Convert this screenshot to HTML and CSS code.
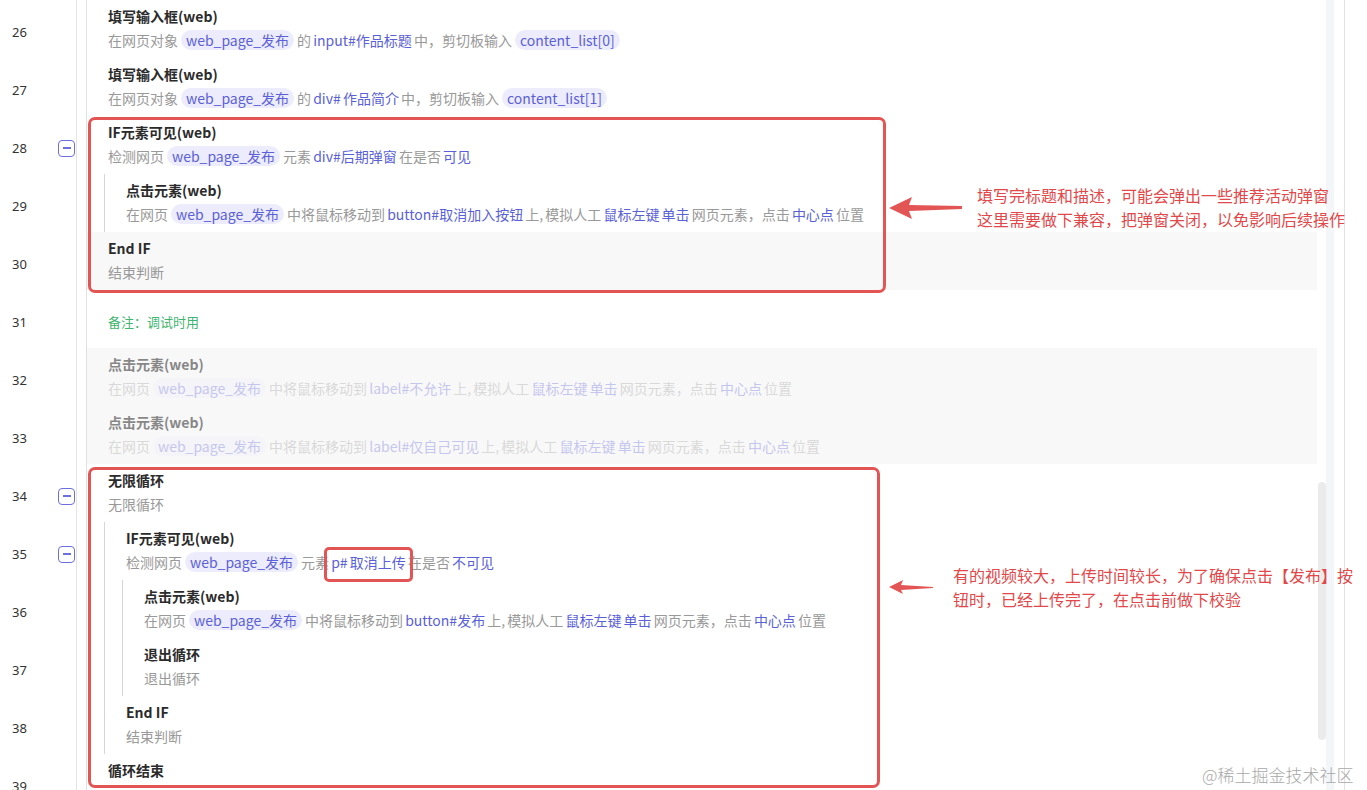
FILE: index.html
```html
<!DOCTYPE html>
<html lang="zh-CN">
<head>
  <meta charset="UTF-8">
  <title>流程编辑</title>
  <link rel="stylesheet" href="styles.css">
</head>
<body>
  <div class="editor">
    <div class="gutter">
      <div class="ln"><span class="num">26</span></div>
      <div class="ln"><span class="num">27</span></div>
      <div class="ln"><span class="num">28</span><span class="fold"></span></div>
      <div class="ln"><span class="num">29</span></div>
      <div class="ln"><span class="num">30</span></div>
      <div class="ln"><span class="num">31</span></div>
      <div class="ln"><span class="num">32</span></div>
      <div class="ln"><span class="num">33</span></div>
      <div class="ln"><span class="num">34</span><span class="fold"></span></div>
      <div class="ln"><span class="num">35</span><span class="fold"></span></div>
      <div class="ln"><span class="num">36</span></div>
      <div class="ln"><span class="num">37</span></div>
      <div class="ln"><span class="num">38</span></div>
      <div class="ln"><span class="num">39</span></div>
    </div>

    <div class="content">
      <div class="row">
        <div class="title">填写输入框(web)</div>
        <div class="desc">在网页对象<span class="chip">web_page_发布</span>的 <span class="link">input#作品标题</span> 中，剪切板输入<span class="chip">content_list[0]</span></div>
      </div>
      <div class="row">
        <div class="title">填写输入框(web)</div>
        <div class="desc">在网页对象<span class="chip">web_page_发布</span>的 <span class="link">div# 作品简介</span> 中，剪切板输入<span class="chip">content_list[1]</span></div>
      </div>
      <div class="row">
        <div class="title">IF元素可见(web)</div>
        <div class="desc">检测网页<span class="chip">web_page_发布</span>元素 <span class="link">div#后期弹窗</span> 在是否 <span class="link">可见</span></div>
      </div>
      <div class="nest">
        <div class="row">
          <div class="title">点击元素(web)</div>
          <div class="desc">在网页<span class="chip">web_page_发布</span>中将鼠标移动到 <span class="link">button#取消加入按钮</span> 上, 模拟人工 <span class="link">鼠标左键</span> <span class="link">单击</span> 网页元素，点击 <span class="link">中心点</span> 位置</div>
        </div>
      </div>
      <div class="row row-grey">
        <div class="title">End IF</div>
        <div class="desc">结束判断</div>
      </div>
      <div class="row row-note">
        <div class="note">备注：调试时用</div>
      </div>
      <div class="row row-grey is-off">
        <div class="title">点击元素(web)</div>
        <div class="desc">在网页<span class="chip">web_page_发布</span>中将鼠标移动到 <span class="link">label#不允许</span> 上, 模拟人工 <span class="link">鼠标左键</span> <span class="link">单击</span> 网页元素，点击 <span class="link">中心点</span> 位置</div>
      </div>
      <div class="row row-grey is-off">
        <div class="title">点击元素(web)</div>
        <div class="desc">在网页<span class="chip">web_page_发布</span>中将鼠标移动到 <span class="link">label#仅自己可见</span> 上, 模拟人工 <span class="link">鼠标左键</span> <span class="link">单击</span> 网页元素，点击 <span class="link">中心点</span> 位置</div>
      </div>
      <div class="row">
        <div class="title">无限循环</div>
        <div class="desc">无限循环</div>
      </div>
      <div class="nest">
        <div class="row">
          <div class="title">IF元素可见(web)</div>
          <div class="desc">检测网页<span class="chip">web_page_发布</span>元素 <span class="link">p# 取消上传</span> 在是否 <span class="link">不可见</span></div>
        </div>
        <div class="nest">
          <div class="row">
            <div class="title">点击元素(web)</div>
            <div class="desc">在网页<span class="chip">web_page_发布</span>中将鼠标移动到 <span class="link">button#发布</span> 上, 模拟人工 <span class="link">鼠标左键</span> <span class="link">单击</span> 网页元素，点击 <span class="link">中心点</span> 位置</div>
          </div>
          <div class="row">
            <div class="title">退出循环</div>
            <div class="desc">退出循环</div>
          </div>
        </div>
        <div class="row">
          <div class="title">End IF</div>
          <div class="desc">结束判断</div>
        </div>
      </div>
      <div class="row">
        <div class="title">循环结束</div>
      </div>
    </div>

    <div class="scroll"><div class="thumb"></div></div>
    <div class="edge"></div>
  </div>

  <!-- annotations drawn over the screenshot -->
  <div class="mark mark-if"></div>
  <div class="mark mark-loop"></div>
  <div class="mark mark-small"></div>

  <svg class="arrow arrow-1" width="80" height="30" viewBox="0 0 80 30">
    <polygon points="1,14 24,3 21,11 74,12 74,15 21,17 24,25" fill="#e35454"/>
  </svg>
  <svg class="arrow arrow-2" width="50" height="20" viewBox="0 0 50 20">
    <polygon points="1,10 15,3 13,8 45,10 45,11 13,13 15,17" fill="#e35454"/>
  </svg>

  <div class="tip tip-1">填写完标题和描述，可能会弹出一些推荐活动弹窗<br>这里需要做下兼容，把弹窗关闭，以免影响后续操作</div>
  <div class="tip tip-2">有的视频较大，上传时间较长，为了确保点击【发布】按钮时，已经上传完了，在点击前做下校验</div>

  <div class="watermark">@稀土掘金技术社区</div>
</body>
</html>
```

FILE: styles.css
```css
body {
  margin: 0;
  height: 790px;
  overflow: hidden;
  position: relative;
  background: #fff;
  font-family: "Noto Sans CJK SC", "Noto Sans", sans-serif;
  color: #333;
}
.editor {
  display: flex;
  height: 790px;
}
.gutter {
  width: 76px;
  border-right: 1px solid #e4e4e4;
  flex-shrink: 0;
}
.ln {
  height: 58px;
  padding-top: 6px;
  box-sizing: border-box;
  display: flex;
  align-items: center;
  font-family: "Noto Sans", sans-serif;
  font-size: 13px;
  color: #333;
}
.num {
  width: 46px;
  padding-left: 12px;
}
.fold {
  width: 17px;
  height: 17px;
  box-sizing: border-box;
  border: 1.6px solid #6d70dc;
  border-radius: 4px;
  display: flex;
  align-items: center;
  justify-content: center;
}
.fold::before {
  content: "";
  width: 8px;
  height: 1.6px;
  background: #6d70dc;
}
.content {
  width: 1230px;
  margin-left: 9px;
  border-left: 1px solid #e0e0e0;
  flex-shrink: 0;
}
.row {
  height: 58px;
  box-sizing: border-box;
  padding: 5px 0 0 21px;
}
.nest {
  margin-left: 17px;
  border-left: 1px solid #d6d6d6;
}
.nest .row {
  padding-left: 21px;
}
.title {
  font-size: 14px;
  line-height: 22px;
  font-weight: bold;
  color: #2b2b2b;
}
.desc {
  font-size: 14px;
  line-height: 26px;
  color: #999;
  white-space: nowrap;
  word-spacing: -1px;
}
.link {
  color: #5b5fd8;
}
.chip {
  display: inline-block;
  line-height: 20px;
  padding: 0 5px;
  margin: 0 3px;
  border-radius: 10px;
  background: #ececfd;
  color: #5b5fd8;
  word-spacing: 0;
}
.row-grey {
  background: #f8f8f8;
}
.is-off .title {
  opacity: 0.55;
}
.is-off .desc {
  opacity: 0.32;
}
.row-note {
  display: flex;
  align-items: center;
  padding-top: 4px;
}
.note {
  font-size: 13px;
  color: #3fb56f;
}
.scroll {
  width: 27px;
  flex-shrink: 0;
  background: linear-gradient(to right, #fff 9px, #f3f6f9 9px, #f3f6f9 17px, #fff 17px);
}
.thumb {
  width: 8px;
  height: 258px;
  margin: 482px 0 0 1px;
  border-radius: 4px;
  background: #ebebeb;
}
.edge {
  flex: 1;
  border-left: 1px solid #e2e2e2;
}
.mark {
  position: absolute;
  box-sizing: border-box;
  border: 3px solid #e35454;
  border-radius: 7px;
}
.mark-if {
  left: 88px;
  top: 117px;
  width: 798px;
  height: 176px;
}
.mark-loop {
  left: 88px;
  top: 467px;
  width: 792px;
  height: 321px;
}
.mark-small {
  left: 324px;
  top: 547px;
  width: 89px;
  height: 35px;
  border-radius: 5px;
}
.arrow {
  position: absolute;
}
.arrow-1 {
  left: 888px;
  top: 194px;
}
.arrow-2 {
  left: 888px;
  top: 577px;
}
.tip {
  position: absolute;
  font-size: 16px;
  line-height: 24px;
  color: #e2484a;
}
.tip-1 {
  left: 977px;
  top: 183px;
  white-space: nowrap;
}
.tip-2 {
  left: 953px;
  top: 563px;
  width: 402px;
}
.watermark {
  position: absolute;
  left: 1202px;
  top: 762px;
  font-size: 17px;
  color: #a8a8a8;
  font-family: "Noto Sans CJK SC", sans-serif;
  font-weight: 300;
}
```
